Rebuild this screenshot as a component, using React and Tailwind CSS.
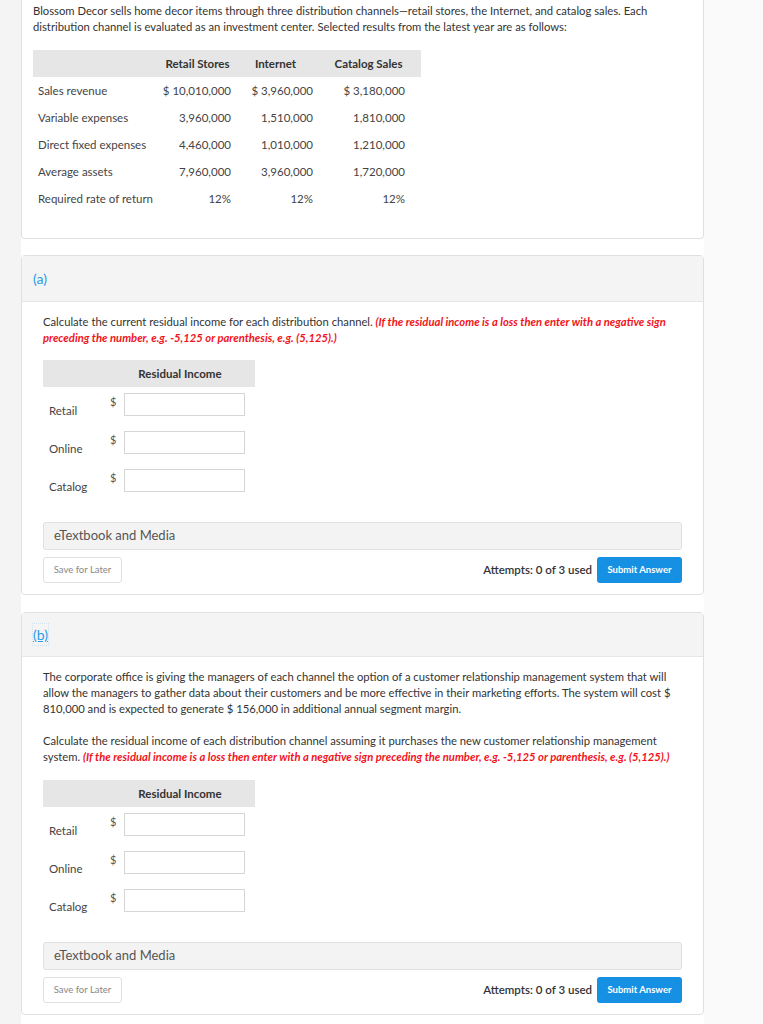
const rows = [
  ['Sales revenue', '$ 10,010,000', '$ 3,960,000', '$ 3,180,000'],
  ['Variable expenses', '3,960,000', '1,510,000', '1,810,000'],
  ['Direct fixed expenses', '4,460,000', '1,010,000', '1,210,000'],
  ['Average assets', '7,960,000', '3,960,000', '1,720,000'],
  ['Required rate of return', '12%', '12%', '12%'],
]

const channels = ['Retail', 'Online', 'Catalog']

function ResidualTable() {
  return (
    <div className="w-[212px]">
      <div className="h-[27px] bg-[#e6e6e6] flex items-center text-[11.5px] font-bold text-[#333]">
        <div className="w-[62px]" />
        <div className="flex-1 text-center">Residual Income</div>
      </div>
      <div className="pt-[6px]">
        {channels.map(c => (
          <div key={c} className="flex h-[38px]">
            <div className="w-[67px] pl-[6px] pt-[9px] text-[11.5px] text-[#444]">{c}</div>
            <div className="w-[14px] pt-[1px] text-[11px] text-[#555]">$</div>
            <div className="w-[121px] h-[23px] border border-[#d6d6d6] bg-white" />
          </div>
        ))}
      </div>
    </div>
  )
}

function Footer() {
  return (
    <div>
      <div className="h-[28px] bg-[#f3f3f3] border border-[#e0e0e0] rounded-[3px] flex items-center pl-[10px] text-[13px] text-[#555]">
        eTextbook and Media
      </div>
      <div className="flex items-center mt-[7px]">
        <div className="w-[79px] h-[26px] border border-[#e0e0e0] rounded-[3px] flex items-center justify-center text-[9.5px] text-[#888]">
          Save for Later
        </div>
        <div className="ml-auto text-[11.5px] font-semibold text-[#333] mr-[5px]">Attempts: 0 of 3 used</div>
        <div className="w-[85px] h-[26px] bg-[#1690e3] rounded-[3px] flex items-center justify-center text-[9.5px] font-bold text-white">
          Submit Answer
        </div>
      </div>
    </div>
  )
}

function RedNote({ children }) {
  return <span className="font-bold italic text-[#f2141c]">{children}</span>
}

export default function App() {
  return (
    <div className="min-h-screen flex bg-[#fafafa] font-['Lato','Liberation_Sans',sans-serif]">
      <div className="w-[21px] bg-[#f4f4f4]" />
      <div className="w-[683px] bg-white pb-[9px]">
        {/* Enunciado */}
        <div className="h-[239px] border border-t-0 border-[#e0e0e0] rounded-b-[4px] px-[11px] pt-[3px]">
          <p className="text-[11.25px] leading-[16px] text-[#333]">
            Blossom Decor sells home decor items through three distribution channels—retail stores, the Internet, and catalog sales. Each distribution channel is evaluated as an investment center. Selected results from the latest year are as follows:
          </p>
          <div className="mt-[15px] w-[388px] text-[11.5px] text-[#444]">
            <div className="grid grid-cols-[127px_75px_81px_105px] h-[27px] bg-[#e6e6e6] items-center font-bold text-[#333]">
              <div />
              <div className="text-center">Retail Stores</div>
              <div className="text-center">Internet</div>
              <div className="text-center">Catalog Sales</div>
            </div>
            {rows.map(r => (
              <div key={r[0]} className="grid grid-cols-[127px_75px_81px_105px] h-[27px] items-center">
                <div className="pl-[5px]">{r[0]}</div>
                <div className="text-right pr-[4px]">{r[1]}</div>
                <div className="text-right pr-[3px]">{r[2]}</div>
                <div className="text-right pr-[16px]">{r[3]}</div>
              </div>
            ))}
          </div>
        </div>

        {/* Parte (a) */}
        <div className="mt-[16px] border border-[#e0e0e0] rounded-[4px]">
          <div className="h-[46px] bg-[#f4f4f4] border-b border-[#e6e6e6] flex items-center pl-[11px] text-[14px] text-[#2a9be8]">
            (a)
          </div>
          <div className="px-[21px] pt-[12px] pb-[11px]">
            <p className="text-[11.25px] leading-[16px] text-[#333]">
              Calculate the current residual income for each distribution channel.{' '}
              <RedNote>(If the residual income is a loss then enter with a negative sign preceding the number, e.g. -5,125 or parenthesis, e.g. (5,125).)</RedNote>
            </p>
            <div className="mt-[14px]">
              <ResidualTable />
            </div>
            <div className="mt-[15px]">
              <Footer />
            </div>
          </div>
        </div>

        {/* Parte (b) */}
        <div className="mt-[17px] border border-[#e0e0e0] rounded-[4px]">
          <div className="h-[44px] bg-[#f4f4f4] border-b border-[#e6e6e6] flex items-center pl-[11px] text-[14px] text-[#2a9be8]">
            <span className="underline outline outline-1 outline-dotted outline-[#cfe2f1]">(b)</span>
          </div>
          <div className="px-[21px] pt-[12px] pb-[11px]">
            <p className="text-[11.25px] leading-[16px] text-[#333]">
              The corporate office is giving the managers of each channel the option of a customer relationship management system that will allow the managers to gather data about their customers and be more effective in their marketing efforts. The system will cost $ 810,000 and is expected to generate $ 156,000 in additional annual segment margin.
            </p>
            <p className="mt-[16px] text-[11.25px] leading-[16px] text-[#333]">
              Calculate the residual income of each distribution channel assuming it purchases the new customer relationship management system.{' '}
              <RedNote>(If the residual income is a loss then enter with a negative sign preceding the number, e.g. -5,125 or parenthesis, e.g. (5,125).)</RedNote>
            </p>
            <div className="mt-[15px]">
              <ResidualTable />
            </div>
            <div className="mt-[15px]">
              <Footer />
            </div>
          </div>
        </div>
      </div>
      <div className="flex-1" />
    </div>
  )
}
